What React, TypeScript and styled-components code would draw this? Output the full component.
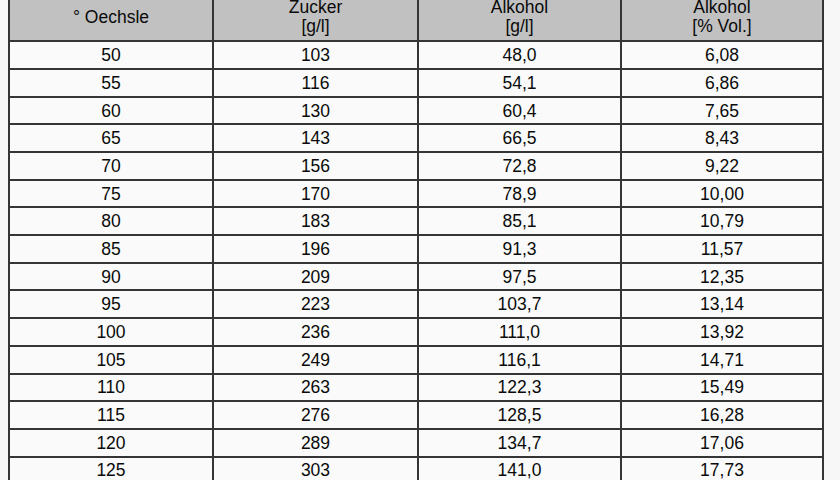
import React from "react";
import styled, { createGlobalStyle } from "styled-components";

const Global = createGlobalStyle`
  html, body {
    margin: 0;
    padding: 0;
    background: #f6f7f6;
    overflow: hidden;
  }
  body {
    font-family: "Liberation Sans", Arial, sans-serif;
  }
`;

const Page = styled.div`
  width: 840px;
  height: 480px;
  overflow: hidden;
  padding-left: 8px;
  box-sizing: border-box;
`;

const Table = styled.table`
  margin-top: -6px;
  border-collapse: separate;
  border-spacing: 0;
  border-left: 2px solid #353535;
  table-layout: fixed;
  width: 816px;
  font-family: "Liberation Sans", Arial, sans-serif;
  font-size: 17.5px;
  color: #0a0a0a;
`;

const HeadCell = styled.th`
  box-sizing: border-box;
  height: 48.3px;
  padding: 0;
  background: #c1c1c1;
  border-right: 2px solid #353535;
  border-bottom: 2px solid #353535;
  font-weight: normal;
  line-height: 19px;
  text-align: center;
  vertical-align: middle;
`;

const Cell = styled.td`
  box-sizing: border-box;
  height: 27.7px;
  padding: 0;
  background: #f9faf9;
  border-right: 2px solid #353535;
  border-bottom: 2px solid #353535;
  text-align: center;
  vertical-align: middle;
  line-height: 20px;
`;

const widths = [204, 205, 203, 202];

const rows: string[][] = [
  ["50", "103", "48,0", "6,08"],
  ["55", "116", "54,1", "6,86"],
  ["60", "130", "60,4", "7,65"],
  ["65", "143", "66,5", "8,43"],
  ["70", "156", "72,8", "9,22"],
  ["75", "170", "78,9", "10,00"],
  ["80", "183", "85,1", "10,79"],
  ["85", "196", "91,3", "11,57"],
  ["90", "209", "97,5", "12,35"],
  ["95", "223", "103,7", "13,14"],
  ["100", "236", "111,0", "13,92"],
  ["105", "249", "116,1", "14,71"],
  ["110", "263", "122,3", "15,49"],
  ["115", "276", "128,5", "16,28"],
  ["120", "289", "134,7", "17,06"],
  ["125", "303", "141,0", "17,73"],
];

export default function App() {
  return (
    <Page>
      <Global />
      <Table>
        <colgroup>
          {widths.map((w, i) => (
            <col key={i} style={{ width: w }} />
          ))}
        </colgroup>
        <thead>
          <tr>
            <HeadCell>° Oechsle</HeadCell>
            <HeadCell>
              Zucker
              <br />
              [g/l]
            </HeadCell>
            <HeadCell>
              Alkohol
              <br />
              [g/l]
            </HeadCell>
            <HeadCell>
              Alkohol
              <br />
              [% Vol.]
            </HeadCell>
          </tr>
        </thead>
        <tbody>
          {rows.map((r) => (
            <tr key={r[0]}>
              {r.map((v, i) => (
                <Cell key={i}>{v}</Cell>
              ))}
            </tr>
          ))}
        </tbody>
      </Table>
    </Page>
  );
}
